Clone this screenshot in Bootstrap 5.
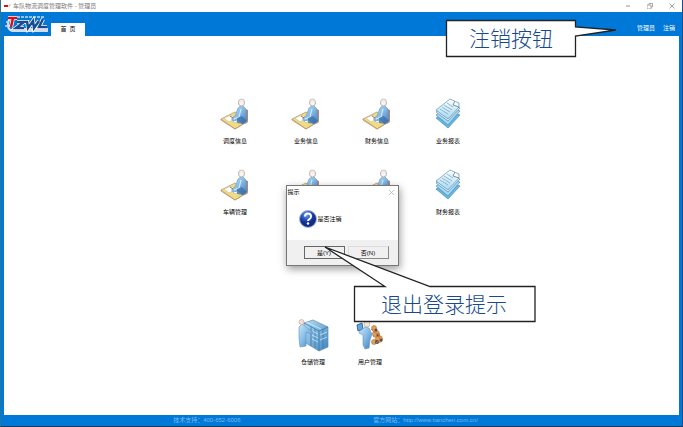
<!DOCTYPE html>
<html lang="zh-CN">
<head>
<meta charset="utf-8">
<meta name="viewport" content="width=device-width, initial-scale=1">
<title>物流调度管理软件</title>
<link href="https://cdn.jsdelivr.net/npm/bootstrap@5.3.0/dist/css/bootstrap.min.css" rel="stylesheet">
<style>
:root{--blue:#0078d7}
body{font:6px/8px "Liberation Sans","Noto Sans CJK SC",sans-serif;color:#000;background:#fff}
.app-window{min-height:100vh;background:var(--blue);border-left:1px solid #287598;border-right:1px solid #174f91;border-bottom:1px solid #163b5c;overflow:hidden}
.title-bar{height:12px;background:#fff;color:#777;padding-left:2px;gap:2px}
.title-bar button,.dialog-close{border:0;background:none;padding:0;line-height:0}
.window-tools{gap:16px;padding-right:7px}
.app-header{height:24px;padding:0 7px 0 4px}
.brand-logo{width:44px;height:20px}
.home-tab{width:34px;height:13px;background:#fff;color:#000;text-decoration:none;line-height:13px;text-align:center;margin-left:2px}
.user-links{gap:8px;height:12px}
.user-links a{color:#fff;text-decoration:none}
.workspace{background:#fff;margin:0 3px;padding-top:60px}
.tile-grid{display:grid;grid-template-columns:repeat(4,71px);justify-content:center}
.tile{height:71px;color:#000;text-decoration:none;display:flex;flex-direction:column;align-items:center}
.tile svg{width:36px;height:36px;margin-bottom:5px}
.tile-low{width:57px;height:55px}
.low-row{margin-top:79px}
.app-footer{height:11px;color:#79b9ee;line-height:11px;padding-right:32px}
.app-footer a{color:inherit;text-decoration:none}
.foot-cell{width:200px}
.prompt{left:50%;top:185px;width:113px;margin-left:-56px;background:#fff;border:1px solid #777;box-shadow:1px 3px 8px rgba(0,0,0,.4)}
.prompt-head{height:12px;padding:0 4px 0 1px}
.prompt-body{height:42px;padding-left:12px;gap:1px}
.prompt-foot{height:25px;background:#f0f0f0;gap:3px;padding-right:9px}
.prompt-foot button{width:41px;height:13px;padding:0;background:#f0f0f0;border:1px solid;border-color:#ddd #888 #888 #ddd;font-size:6px;line-height:8px;color:#000}
.prompt-foot .default-choice{border-color:#666}
.callout{font:300 21px/34px "Noto Sans CJK SC",sans-serif;color:#174a8b;text-align:center}
.callout svg{left:0;top:0;overflow:visible;z-index:-1}
.callout-logout{right:106px;top:20px;width:130px;height:37px;z-index:5}
.callout-exit{left:50%;margin-left:12px;top:286px;width:181px;height:36px;z-index:5}
</style>
<script src="https://cdn.jsdelivr.net/npm/bootstrap@5.3.0/dist/js/bootstrap.bundle.min.js"></script>
</head>
<body>
<svg class="position-absolute" width="0" height="0" aria-hidden="true">
<defs>
<linearGradient id="coat" x2="1" y2="1"><stop stop-color="#c9e7fa"/><stop offset=".5" stop-color="#83b9e5"/><stop offset="1" stop-color="#3d79b8"/></linearGradient>
<linearGradient id="sheet" x2="0" y2="1"><stop stop-color="#fff"/><stop offset="1" stop-color="#a5d8f2"/></linearGradient>
<linearGradient id="rack" x2="1" y2="1"><stop stop-color="#b9def4"/><stop offset="1" stop-color="#3f86bd"/></linearGradient>
<radialGradient id="orb" cx=".4" cy=".25"><stop stop-color="#7fa4ec"/><stop offset=".55" stop-color="#2854be"/><stop offset="1" stop-color="#102d87"/></radialGradient>
</defs>
<symbol id="desk" viewBox="0 0 36 36">
<path d="M28 13l3 1v12l-3 2" fill="#b98478"/>
<path d="M4 23L18 16l13 9-13 8z" fill="#f0dc85" stroke="#bc9570" stroke-width=".8"/><path d="M4 23v1l14 9 13-8" fill="none" stroke="#c69b75"/>
<path d="M7 22l7-3 5 3-7 4z" fill="#fff" stroke="#b8c18b" stroke-width=".6"/><path d="M14 23l6-3 4 3-6 4z" fill="#f9fdfc" stroke="#a6b6ab" stroke-width=".5"/>
<path d="M18 20l3-8 4-3 4 4 1 12-4 3-5-4-5 1-1-3z" fill="url(#coat)" stroke="#5b93c6" stroke-width=".6"/><path d="M24 13l-2 8-5 2" fill="none" stroke="#e0f3ff"/><path d="M20 22l5-2 5 5-4 3-6-1z" fill="#376ba9" opacity=".7"/><path d="M13 20l3 2" stroke="#a1673a"/>
<circle cx="24.500" cy="7" r="3" fill="#fff2e8" stroke="#a9a2a3" stroke-width=".8"/><path d="M21.500 6q0-3 3-3t3 3" fill="#eee" stroke="#999" stroke-width=".5"/>
</symbol>
<symbol id="papers" viewBox="0 0 36 36">
<g stroke="#477fa5" stroke-width=".6"><path d="M6 22l12-8 12 5-12 13z" fill="#60b9e7"/><path d="M6 19l12-8 12 4-12 14z" fill="#a6d6f0"/><path d="M6 16L18 7l12 5-12 13z" fill="#d7effb"/><path d="M6 14L20 3l9 4v4l-11 12z" fill="url(#sheet)"/></g>
<path d="M10 13l8 5M12 11l8 5M14 9l8 5M17 7l6 4" stroke="#78a8c5" stroke-width=".8"/><path d="M25 5l-2 4 6 2" fill="#f7fcff" stroke="#4b6879" stroke-width=".7"/>
</symbol>
<symbol id="servers" viewBox="0 0 36 36">
<path d="M9 6l9-3 15 7v20l-9 4-15-9z" fill="url(#rack)" stroke="#5e91b5" stroke-width=".7"/><path d="M9 6l15 8 9-4M24 14v20M16 10v19M20 12v19M28 12v20" fill="none" stroke="#377caf" stroke-width=".8"/><path d="M17 14l6 3M17 18l6 3M17 22l6 3M25 18l7-3M25 23l7-3M11 5l15 7" stroke="#d9f1ff" stroke-width=".7"/>
<path d="M4 10l3-3 4 3 7 5-1 2-6-2v14l-6 1-1-9z" fill="url(#coat)" stroke="#5e96c4" stroke-width=".6"/><circle cx="6.500" cy="5" r="2.500" fill="#f5dfd5" stroke="#b8a49d" stroke-width=".6"/>
</symbol>
<symbol id="people" viewBox="0 0 36 36">
<g fill="#e2a24c" stroke="#976040" stroke-width=".5"><circle cx="22" cy="11" r="2.500"/><circle cx="24" cy="17" r="3.500"/><circle cx="27" cy="22" r="3.500"/><circle cx="22" cy="25" r="2.500"/></g><g fill="#554b50"><circle cx="24" cy="13" r="1.500"/><circle cx="26" cy="18" r="1.500"/><circle cx="29" cy="23" r="1.500"/><circle cx="25" cy="25" r="2"/></g><path d="M19 12l3 3 5 3 1 5-4 3" fill="none" stroke="#d9734e"/>
<path d="M5 8l5-2 1 6-5 2z" fill="#65a5d9" stroke="#3269a6"/><path d="M8 14l5-4 4 1 3 6-2 6-1 8-4 1-2-4V18l-4-2z" fill="url(#coat)" stroke="#6095c3" stroke-width=".6"/><circle cx="15" cy="7" r="3" fill="#f4e5db" stroke="#a79e9b" stroke-width=".6"/>
</symbol>
</svg>
<div class="app-window d-flex flex-column position-relative">
<div class="title-bar d-flex align-items-center">
<svg width="8" height="8" viewBox="0 0 8 8"><path d="M1 3h4v2H1z" fill="#d1121a"/><path d="M5 4h2V2" fill="none" stroke="#999" stroke-width=".6"/></svg>
<span>车队物流调度管理软件 - 管理员</span>
<div class="window-tools d-flex ms-auto">
<button type="button" aria-label="最小化"><svg width="6" height="6" viewBox="0 0 6 6"><path d="M1 3h4" stroke="#777" stroke-width=".8"/></svg></button>
<button type="button" aria-label="还原"><svg width="6" height="6" viewBox="0 0 6 6"><path d="M0 2h4v4H0zM2 2V.5h3.500V4H4" fill="none" stroke="#888" stroke-width=".7"/></svg></button>
<button type="button" aria-label="关闭"><svg width="6" height="6" viewBox="0 0 6 6"><path d="M.5.5l5 5m0-5l-5 5" stroke="#777" stroke-width=".7"/></svg></button>
</div></div>
<header class="app-header d-flex align-items-end">
<svg class="brand-logo align-self-center" viewBox="0 0 44 20" role="img" aria-label="TZWL">
<path d="M8 4C2 4 1 15 7 17h35v-2H13" fill="none" stroke="#d4ddeb" stroke-width="2"/><path d="M12 3h27M1 8h5M0 12h5" stroke="#c8d6e4" stroke-width="1.500" stroke-dasharray="3 1"/>
<g fill="none" stroke="#fff" stroke-width="4"><path d="M12 8h7l-8 6h8M22 7l1 7 5-7 1 7 5-7M38 5l-4 8h8"/></g>
<g fill="none" stroke="#174d91" stroke-width="2.500"><path d="M12 8h7l-8 6h8M22 7l1 7 5-7 1 7 5-7M38 5l-4 8h8"/></g>
<path d="M3 4h9M8 4L6 13" stroke="#fff" stroke-width="4"/><path d="M3 4h9M8 4L6 13" stroke="#d50d20" stroke-width="2.500"/></svg>
<a class="home-tab" href="#">首&ensp;页</a>
<nav class="user-links d-flex ms-auto"><a href="#">管理员</a><a href="#">注销</a></nav>
</header>
<main class="workspace flex-grow-1">
<div class="tile-grid">
<a class="tile" href="#"><svg><use href="#desk"/></svg>调度信息</a>
<a class="tile" href="#"><svg><use href="#desk"/></svg>业务信息</a>
<a class="tile" href="#"><svg><use href="#desk"/></svg>财务信息</a>
<a class="tile" href="#"><svg><use href="#papers"/></svg>业务报表</a>
<a class="tile" href="#"><svg><use href="#desk"/></svg>车辆管理</a>
<a class="tile" href="#"><svg><use href="#desk"/></svg>人员管理</a>
<a class="tile" href="#"><svg><use href="#desk"/></svg>客户管理</a>
<a class="tile" href="#"><svg><use href="#papers"/></svg>财务报表</a>
</div>
<div class="low-row d-flex justify-content-center">
<a class="tile tile-low" href="#"><svg><use href="#servers"/></svg>仓储管理</a>
<a class="tile tile-low" href="#"><svg><use href="#people"/></svg>用户管理</a>
</div>
</main>
<footer class="app-footer d-flex justify-content-center">
<span class="foot-cell">技术支持：400-652-6006</span>
<span>官方网站：<a href="#">http://www.tianchen.com.cn/</a></span>
</footer>
<section class="prompt position-absolute" role="dialog" aria-labelledby="prompt-title">
<div class="prompt-head d-flex align-items-center justify-content-between"><span id="prompt-title">提示</span><button class="dialog-close" type="button" aria-label="关闭"><svg width="5" height="5" viewBox="0 0 5 5"><path d="M0 0l5 5m0-5L0 5" stroke="#aaa" stroke-width=".7"/></svg></button></div>
<div class="prompt-body d-flex align-items-center"><svg width="18" height="20" viewBox="0 0 18 20"><circle cx="9" cy="10" r="8.500" fill="url(#orb)" stroke="#adb8d2"/><path d="M6 7.500q0-3 3-3t3 3q0 1.500-1.500 2.500T9 12" fill="none" stroke="#fff" stroke-width="2"/><circle cx="9" cy="14.500" r="1.200" fill="#fff"/></svg><span>是否注销</span></div>
<div class="prompt-foot d-flex align-items-center justify-content-end"><button class="default-choice" type="button">是(Y)</button><button type="button">否(N)</button></div>
</section>
<div class="callout callout-logout position-absolute"><svg class="position-absolute" width="172" height="37"><path d="M.5.500H129.500V7L170 10l-40.500 6V36.500H.5z" fill="#fff" stroke="#222" stroke-width="1.300"/></svg>注销按钮</div>
<div class="callout callout-exit position-absolute"><svg class="position-absolute" width="181" height="36"><path d="M.5.500H31L-29-39 76 .5H181V35.500H.5z" fill="#fff" stroke="#222" stroke-width="1.300"/></svg>退出登录提示</div>
</div>
</body>
</html>
